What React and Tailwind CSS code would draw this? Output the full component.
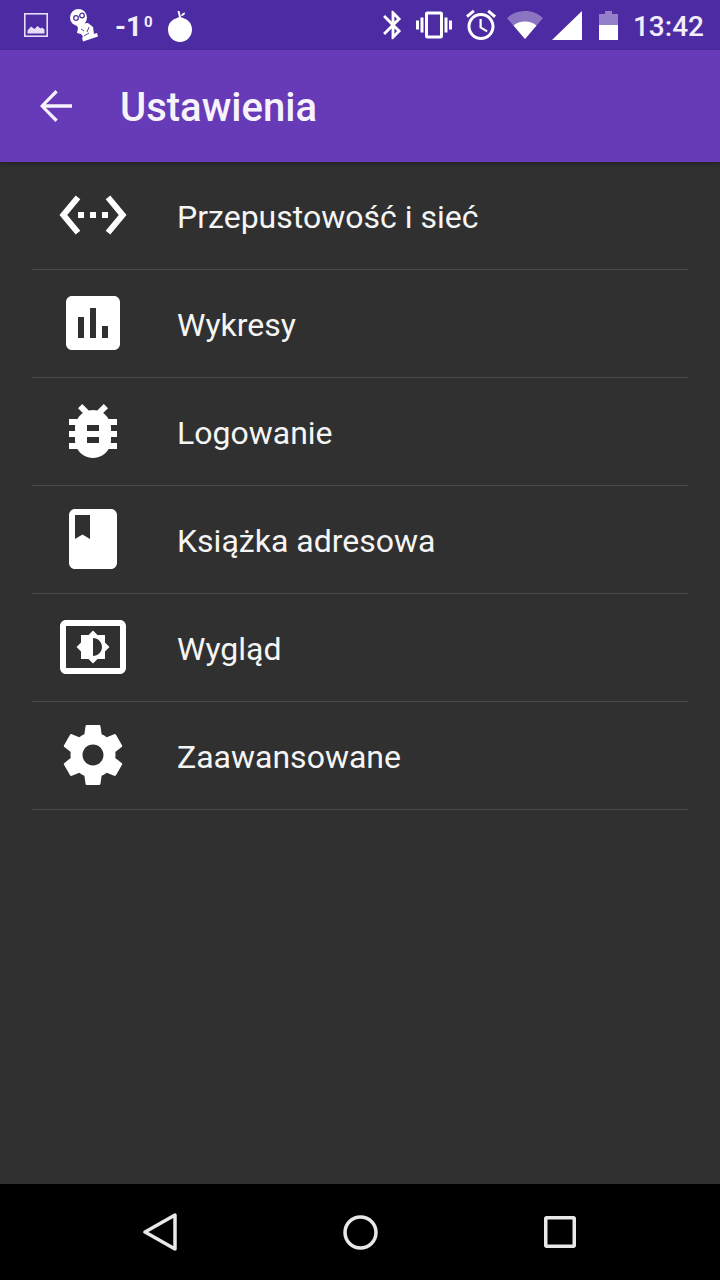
const rows = [
  { label: 'Przepustowość i sieć', d: 'M7.77 6.76L6.23 5.48.82 12l5.41 6.52 1.54-1.28L3.42 12l4.35-5.24zM7 13h2v-2H7v2zm10-2h-2v2h2v-2zm-6 2h2v-2h-2v2zm6.77-7.52l-1.54 1.28L20.58 12l-4.35 5.24 1.54 1.28L23.18 12l-5.41-6.52z' },
  { label: 'Wykresy', d: 'M19 3H5c-1.1 0-2 .9-2 2v14c0 1.1.9 2 2 2h14c1.1 0 2-.9 2-2V5c0-1.1-.9-2-2-2zM9 17H7v-7h2v7zm4 0h-2V7h2v10zm4 0h-2v-4h2v4z' },
  { label: 'Logowanie', d: 'M20 8h-2.81c-.45-.78-1.07-1.45-1.82-1.96L17 4.41 15.59 3l-2.17 2.17C12.96 5.06 12.49 5 12 5c-.49 0-.96.06-1.41.17L8.41 3 7 4.41l1.62 1.63C7.88 6.55 7.26 7.22 6.81 8H4v2h2.09c-.05.33-.09.66-.09 1v1H4v2h2v1c0 .34.04.67.09 1H4v2h2.81c1.04 1.79 2.97 3 5.19 3s4.15-1.21 5.19-3H20v-2h-2.09c.05-.33.09-.66.09-1v-1h2v-2h-2v-1c0-.34-.04-.67-.09-1H20V8zm-6 8h-4v-2h4v2zm0-4h-4v-2h4v2z' },
  { label: 'Książka adresowa', d: 'M18 2H6c-1.1 0-2 .9-2 2v16c0 1.1.9 2 2 2h12c1.1 0 2-.9 2-2V4c0-1.1-.9-2-2-2zM6 4h5v8l-2.5-1.5L6 12V4z' },
  { label: 'Wygląd', d: 'M21 3H3c-1.11 0-2 .89-2 2v14c0 1.11.89 2 2 2h18c1.11 0 2-.89 2-2V5c0-1.11-.89-2-2-2zm0 16.01H3V4.99h18v14.02zM8 16h2.5l1.5 1.5 1.5-1.5H16v-2.5l1.5-1.5-1.5-1.5V8h-2.5L12 6.5 10.5 8H8v2.5L6.5 12 8 13.5V16zm4-7c1.66 0 3 1.34 3 3s-1.34 3-3 3V9z' },
  { label: 'Zaawansowane', d: 'M19.43 12.98c.04-.32.07-.64.07-.98s-.03-.66-.07-.98l2.11-1.65c.19-.15.24-.42.12-.64l-2-3.46c-.12-.22-.39-.3-.61-.22l-2.49 1c-.52-.4-1.08-.73-1.69-.98l-.38-2.65C14.46 2.18 14.25 2 14 2h-4c-.25 0-.46.18-.49.42l-.38 2.65c-.61.25-1.17.59-1.69.98l-2.49-1c-.23-.09-.49 0-.61.22l-2 3.46c-.13.22-.07.49.12.64l2.11 1.65c-.04.32-.07.65-.07.98s.03.66.07.98l-2.11 1.65c-.19.15-.24.42-.12.64l2 3.46c.12.22.39.3.61.22l2.49-1c.52.4 1.08.73 1.69.98l.38 2.65c.03.24.24.42.49.42h4c.25 0 .46-.18.49-.42l.38-2.65c.61-.25 1.17-.59 1.69-.98l2.49 1c.23.09.49 0 .61-.22l2-3.46c.12-.22.07-.49-.12-.64l-2.11-1.65zM12 15.5c-1.93 0-3.5-1.57-3.5-3.5s1.57-3.5 3.5-3.5 3.5 1.57 3.5 3.5-1.57 3.5-3.5 3.5z' },
];

function Icon({ d, className }) {
  return (
    <svg viewBox="0 0 24 24" fill="currentColor" className={className}>
      <path d={d} />
    </svg>
  );
}

function StatusBar() {
  return (
    <div className="flex h-[50px] items-center bg-[#4d2ca3] text-white font-['Roboto',sans-serif]">
      <svg viewBox="0 0 24 24" className="ml-[24px] h-[24px] w-[24px] text-[#e6dcf7]" fill="none">
        <rect x="0.8" y="0.8" width="22.4" height="22.4" stroke="currentColor" strokeWidth="1.6" />
        <path d="M3.5 20.500v-3l3.500-4 3.500 2.500 3-3 3 2.500 1.500-1 2.500 2v4z" fill="currentColor" />
      </svg>
      {/* little robot figure from the weather widget */}
      <svg viewBox="0 0 28 34" className="ml-[22px] h-[34px] w-[28px]" fill="white">
        <circle cx="8.500" cy="9.500" r="8.500" />
        <circle cx="6" cy="10" r="2.300" fill="white" stroke="#4d2ca3" strokeWidth="1.300" />
        <circle cx="12" cy="7.500" r="2.300" fill="white" stroke="#4d2ca3" strokeWidth="1.300" />
        <path d="M6 16l12-1 5 4 1 7-4 3-6 1-3-4-4-1 1-5z" />
        <path d="M12 29.500l15-4.500 1 3.500-15 5z" />
        <path d="M11 21l3 2M19 19l-2 5M14 28l5-3" stroke="#4d2ca3" strokeWidth="0.9" fill="none" />
      </svg>
      <div className="ml-[17px] mt-[3px] flex w-[34px] items-start text-[28px] font-bold leading-none text-[#f3eefb]">
        <span>-1</span>
        <span className="ml-[2px] mt-[2px] text-[15px] leading-none">0</span>
      </div>
      <svg viewBox="0 0 24 32" className="ml-[19px] mt-[1px] h-[32px] w-[24px]" fill="white">
        <path d="M12 7c1 0 2 .5 3 1 5 1.500 9 5.500 9 11.500C24 26.500 18.500 32 12 32S0 26.500 0 19.500C0 13.500 4 9.500 9 8c1-.5 2-1 3-1z" />
        <path d="M9.500 1l2 0 1.500 6h-2z" />
        <path d="M13 6c.5-2 2-3.500 4-3.500.2 2-1.500 3.500-4 3.500z" />
      </svg>

      <Icon className="ml-auto h-[34px] w-[34px]" d="M17.71 7.71L12 2h-1v7.59L6.41 5 5 6.41 10.59 12 5 17.59 6.41 19 11 14.41V22h1l5.71-5.71-4.3-4.29 4.3-4.29zM13 5.83l1.88 1.88L13 9.59V5.83zm1.88 10.46L13 18.17v-3.76l1.88 1.88z" />
      <Icon className="ml-[6px] h-[36px] w-[36px]" d="M0 15h2V9H0v6zm3 2h2V7H3v10zm19-8v6h2V9h-2zm-3 8h2V7h-2v10zM16.5 3h-9C6.67 3 6 3.67 6 4.5v15c0 .83.67 1.5 1.5 1.5h9c.83 0 1.5-.67 1.5-1.5v-15c0-.83-.67-1.5-1.5-1.5zM16 19H8V5h8v14z" />
      <Icon className="ml-[11px] h-[36px] w-[36px]" d="M22 5.72l-4.6-3.86-1.29 1.53 4.6 3.86L22 5.72zM7.88 3.39L6.6 1.86 2 5.71l1.29 1.53 4.59-3.85zM12.5 8H11v6l4.75 2.85.75-1.23-4-2.37V8zM12 4c-4.97 0-9 4.03-9 9s4.03 9 9 9 9-4.03 9-9-4.03-9-9-9zm0 16c-3.87 0-7-3.13-7-7s3.13-7 7-7 7 3.13 7 7-3.13 7-7 7z" />
      <svg viewBox="0 0 36 28" className="ml-[8px] h-[28px] w-[36px]">
        <path d="M18 28L0 7C5 2.500 11 0 18 0s13 2.500 18 7z" fill="white" fillOpacity="0.35" />
        <path d="M18 28L6.500 14.500C9.500 12 13.500 10.500 18 10.500s8.500 1.500 11.500 4z" fill="white" />
      </svg>
      <svg viewBox="0 0 30 29" className="ml-[9px] h-[29px] w-[30px]" fill="white">
        <path d="M0 29L30 0v29z" />
      </svg>
      <svg viewBox="0 0 19 29" className="ml-[17px] h-[29px] w-[19px]" fill="white">
        <path d="M6 0h7v3h6v26H0V3h6z" fillOpacity="0.4" />
        <path d="M0 14h19v15H0z" />
      </svg>
      <span className="ml-[15px] mr-[16px] mt-[3px] text-[28px] font-medium leading-none text-[#f3eefb]">13:42</span>
    </div>
  );
}

function Toolbar() {
  return (
    <div className="relative z-10 flex h-[112px] items-center bg-[#673ab7] shadow-[0_2px_4px_rgba(0,0,0,0.3)]">
      <svg viewBox="0 0 24 24" className="ml-[32px] h-[48px] w-[48px] text-[#f7f3fc]" fill="currentColor">
        <path d="M20 11.100H6.900l6-5.900L11.700 4 4 12l7.700 8 1.200-1.200-6-5.900H20z" />
      </svg>
      <h1 className="ml-[40px] mt-[4px] font-['Roboto',sans-serif] text-[40px] font-medium text-[#f7f3fc]">Ustawienia</h1>
    </div>
  );
}

function NavBar() {
  return (
    <div className="flex h-[96px] items-center justify-center bg-black text-[#e8e8e8]">
      <div className="grid w-[600px] grid-cols-3 items-center justify-items-center">
        <svg viewBox="0 0 34 38" className="h-[38px] w-[34px]" fill="none" stroke="currentColor" strokeWidth="3.500" strokeLinejoin="round">
          <path d="M2 19L32 2v34z" />
        </svg>
        <svg viewBox="0 0 35 35" className="h-[35px] w-[35px]" fill="none" stroke="currentColor" strokeWidth="3.500">
          <circle cx="17.500" cy="17.500" r="15.500" />
        </svg>
        <svg viewBox="0 0 32 32" className="h-[32px] w-[32px]" fill="none" stroke="currentColor" strokeWidth="3.500" strokeLinejoin="round">
          <rect x="1.750" y="1.750" width="28.500" height="28.500" rx="1" />
        </svg>
      </div>
    </div>
  );
}

export default function App() {
  return (
    <div className="flex h-[1280px] w-[720px] flex-col bg-[#303030]">
      <StatusBar />
      <Toolbar />
      <div className="flex-1 px-[32px]">
        {rows.map((row) => (
          <div key={row.label} className="flex h-[108px] items-center border-b border-[#4a4a4a] pb-[1px]">
            <Icon d={row.d} className="ml-[25px] h-[72px] w-[72px] text-white" />
            <span className="ml-[48px] mt-[3px] font-['Roboto',sans-serif] text-[32px] text-[#f5f5f5]">{row.label}</span>
          </div>
        ))}
      </div>
      <NavBar />
    </div>
  );
}
